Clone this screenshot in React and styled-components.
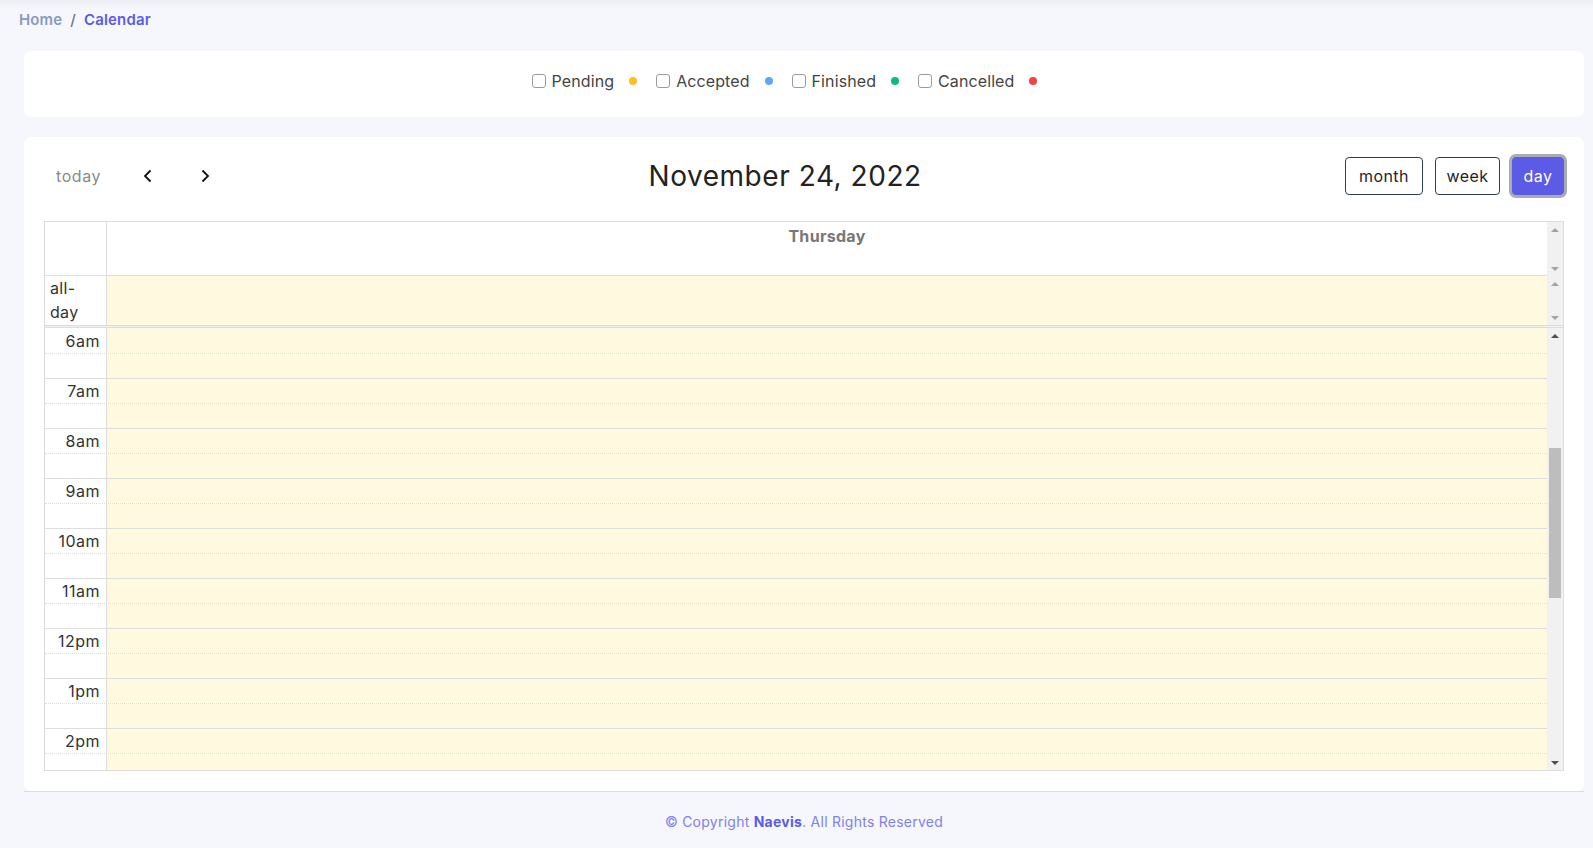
import React from "react";
import styled, { createGlobalStyle } from "styled-components";

const font = `"Inter", "Liberation Sans", sans-serif`;
const line = "#dddddd";
const today = "rgba(255, 220, 40, 0.15)";

const GlobalStyle = createGlobalStyle`
  html, body { margin: 0; padding: 0; }
  body {
    background: #f6f7fc;
    font-family: ${font};
    color: #333;
  }
  * { box-sizing: border-box; }
`;

const Page = styled.div`
  min-height: 100vh;
  background: linear-gradient(#eceef4, #f6f7fc 9px);
`;

const Breadcrumb = styled.nav`
  display: flex;
  align-items: flex-start;
  gap: 8px;
  padding: 11px 0 0 19px;
  height: 51px;
  font-size: 15px;
  font-weight: 600;
  line-height: 17px;
  letter-spacing: 0.15px;
`;

const Crumb = styled.span`
  color: ${({ active }) => (active ? "#5b5be6" : "#899bbd")};
`;

const Slash = styled.span`
  color: #6c757d;
  font-weight: 500;
`;

const Content = styled.main`
  padding: 0 9px 0 24px;
  display: flex;
  flex-direction: column;
  gap: 20px;
`;

const Card = styled.section`
  background: #fff;
  border-radius: 8px;
`;

const LegendCard = styled(Card)`
  height: 66px;
  display: flex;
  align-items: center;
  justify-content: center;
  gap: 19px;
  padding: 0 39px 6px 0;
`;

const LegendItem = styled.div`
  display: flex;
  align-items: center;
  gap: 15px;
`;

const CheckLabel = styled.label`
  display: flex;
  align-items: center;
  gap: 6px;
  font-size: 16px;
  letter-spacing: 0.1px;
  color: #444;
`;

const Check = styled.input`
  appearance: none;
  margin: 0;
  width: 14px;
  height: 14px;
  border: 1px solid #9a9a9a;
  border-radius: 3px;
  background: #fff;
`;

const Dot = styled.span`
  width: 8px;
  height: 8px;
  border-radius: 50%;
  background: ${({ color }) => color};
`;

const CalendarCard = styled(Card)`
  padding: 20px 20px 20px;
`;

const Toolbar = styled.div`
  height: 38px;
  margin-bottom: 26px;
  display: flex;
  align-items: center;
  justify-content: space-between;
`;

const Chunk = styled.div`
  display: flex;
  align-items: center;
  gap: ${({ gap }) => gap || 0}px;
`;

const TodayButton = styled.button`
  border: 0;
  background: transparent;
  font-family: ${font};
  font-size: 16px;
  letter-spacing: 0.6px;
  color: #8a8a8a;
  padding: 6px 12px;
  height: 38px;
`;

const NavButton = styled.button`
  border: 0;
  background: transparent;
  width: 40px;
  height: 38px;
  display: flex;
  align-items: center;
  justify-content: center;
  padding: 0;
`;

const Title = styled.h2`
  margin: 0;
  font-size: 28px;
  font-weight: 400;
  color: #222;
  letter-spacing: 0.55px;
`;

const ViewButton = styled.button`
  width: ${({ w }) => w}px;
  height: 38px;
  padding: 0;
  font-family: ${font};
  font-size: 16px;
  letter-spacing: 0.4px;
  border-radius: 4px;
  border: 1px solid ${({ active }) => (active ? "#5b5be6" : "#2c3e50")};
  background: ${({ active }) => (active ? "#5b5be6" : "#fff")};
  color: ${({ active }) => (active ? "#fff" : "#212529")};
  box-shadow: ${({ active }) => (active ? "0 0 0 3px #a8acb4" : "none")};
`;

const Table = styled.div`
  border: 1px solid ${line};
  display: flex;
  flex-direction: column;
`;

const Section = styled.div`
  display: flex;
  height: ${({ h }) => h}px;
`;

const Body = styled.div`
  flex: 1;
  display: flex;
  flex-direction: column;
`;

const Gutter = styled.div`
  width: 16px;
  flex: none;
  background: #f1f1f1;
  display: flex;
  flex-direction: column;
`;

const ArrowBox = styled.div`
  height: 15px;
  flex: none;
  display: flex;
  align-items: center;
  justify-content: center;

  &::before {
    content: "";
    border-left: 4px solid transparent;
    border-right: 4px solid transparent;
    ${({ down, dark }) =>
      down
        ? `border-top: 4px solid ${dark ? "#505050" : "#a3a3a3"};`
        : `border-bottom: 4px solid ${dark ? "#505050" : "#a3a3a3"};`}
  }
`;

const Track = styled.div`
  flex: 1;
  display: flex;
  flex-direction: column;
  padding: 0 2px;
`;

const Thumb = styled.div`
  height: 150px;
  margin-top: ${({ offset }) => offset}px;
  background: #bdbdbd;
`;

const Row = styled.div`
  display: flex;
  height: ${({ h }) => (h ? `${h}px` : "auto")};
  flex: ${({ h }) => (h ? "none" : "1")};
  border-bottom: ${({ bottom }) => (bottom ? `1px solid ${line}` : "0")};
  border-top: ${({ top }) => top || "0"};
`;

const Axis = styled.div`
  width: 62px;
  flex: none;
  border-right: 1px solid ${line};
  background: #fff;
  display: flex;
  align-items: center;
  justify-content: flex-end;
  padding: 0 6px 0 4px;
  font-size: 16px;
  letter-spacing: 0.5px;
  color: #333;
`;

const AllDayAxis = styled(Axis)`
  align-items: flex-start;
  justify-content: flex-start;
  padding: 0 4px 0 5px;
  line-height: 24px;
  letter-spacing: 0.3px;

  span {
    width: 40px;
  }
`;

const DayHead = styled.div`
  flex: 1;
  text-align: center;
  padding-top: 5px;
  font-size: 16px;
  font-weight: 700;
  letter-spacing: 0.3px;
  color: #777;
  line-height: 18px;
`;

const Lane = styled.div`
  flex: 1;
  background: ${today};
`;

const Divider = styled.div`
  height: 3px;
  border-top: 1px solid ${line};
  border-bottom: 1px solid ${line};
  background: #f1f1f1;
`;

const Footer = styled.footer`
  margin: 0 9px 0 24px;
  border-top: 1px solid #cddfff;
  padding: 21px 0 20px;
  text-align: center;
  font-size: 14px;
  letter-spacing: 0.25px;
  color: #8080ee;

  b {
    color: #5b5be6;
    font-weight: 700;
  }
`;

const Chevron = ({ dir }) => (
  <svg width="16" height="16" viewBox="0 0 16 16" fill="none">
    <polyline
      points={dir === "left" ? "10.5,2.5 5,8 10.5,13.5" : "5.5,2.5 11,8 5.5,13.5"}
      stroke="#111"
      strokeWidth="1.8"
    />
  </svg>
);

const Scrollbar = ({ thumb, dark }) => (
  <Gutter>
    <ArrowBox dark={dark} />
    <Track>{thumb !== undefined && <Thumb offset={thumb} />}</Track>
    <ArrowBox down dark={dark} />
  </Gutter>
);

const statuses = [
  { label: "Pending", color: "#fbbf24" },
  { label: "Accepted", color: "#60a5fa" },
  { label: "Finished", color: "#10b981" },
  { label: "Cancelled", color: "#ef4444" },
];

const views = [
  { label: "month", w: 78 },
  { label: "week", w: 65 },
  { label: "day", w: 52, active: true },
];

const hourLabel = (h) => {
  const n = h % 12 === 0 ? 12 : h % 12;
  return `${n}${h < 12 ? "am" : "pm"}`;
};

// visible slots: 6:00 through 14:30
const slots = Array.from({ length: 18 }, (_, i) => ({
  hour: 6 + Math.floor(i / 2),
  major: i % 2 === 0,
}));

export default function App() {
  return (
    <Page>
      <GlobalStyle />
      <Breadcrumb>
        <Crumb>Home</Crumb>
        <Slash>/</Slash>
        <Crumb active>Calendar</Crumb>
      </Breadcrumb>
      <Content>
        <LegendCard>
          {statuses.map((s) => (
            <LegendItem key={s.label}>
              <CheckLabel>
                <Check type="checkbox" />
                {s.label}
              </CheckLabel>
              <Dot color={s.color} />
            </LegendItem>
          ))}
        </LegendCard>

        <CalendarCard>
          <Toolbar>
            <Chunk gap={15}>
              <TodayButton>today</TodayButton>
              <Chunk gap={17}>
                <NavButton aria-label="prev">
                  <Chevron dir="left" />
                </NavButton>
                <NavButton aria-label="next">
                  <Chevron dir="right" />
                </NavButton>
              </Chunk>
            </Chunk>
            <Title>November 24, 2022</Title>
            <Chunk gap={12}>
              {views.map((v) => (
                <ViewButton key={v.label} w={v.w} active={v.active}>
                  {v.label}
                </ViewButton>
              ))}
            </Chunk>
          </Toolbar>

          <Table>
            <Section h={54}>
              <Body>
                <Row h={54} bottom>
                  <Axis />
                  <DayHead>Thursday</DayHead>
                </Row>
              </Body>
              <Scrollbar />
            </Section>
            <Section h={49}>
              <Body>
                <Row h={49}>
                  <AllDayAxis>
                    <span>all-day</span>
                  </AllDayAxis>
                  <Lane />
                </Row>
              </Body>
              <Scrollbar />
            </Section>
            <Divider />
            <Section h={442}>
              <Body>
                {slots.map((s, i) => (
                  <Row
                    key={i}
                    h={i === slots.length - 1 ? 0 : 25}
                    top={i === 0 ? "0" : s.major ? `1px solid ${line}` : `1px dotted ${line}`}
                  >
                    <Axis>{s.major ? hourLabel(s.hour) : ""}</Axis>
                    <Lane />
                  </Row>
                ))}
              </Body>
              <Scrollbar dark thumb={105} />
            </Section>
          </Table>
        </CalendarCard>
      </Content>
      <Footer>
        © Copyright <b>Naevis</b>. All Rights Reserved
      </Footer>
    </Page>
  );
}
